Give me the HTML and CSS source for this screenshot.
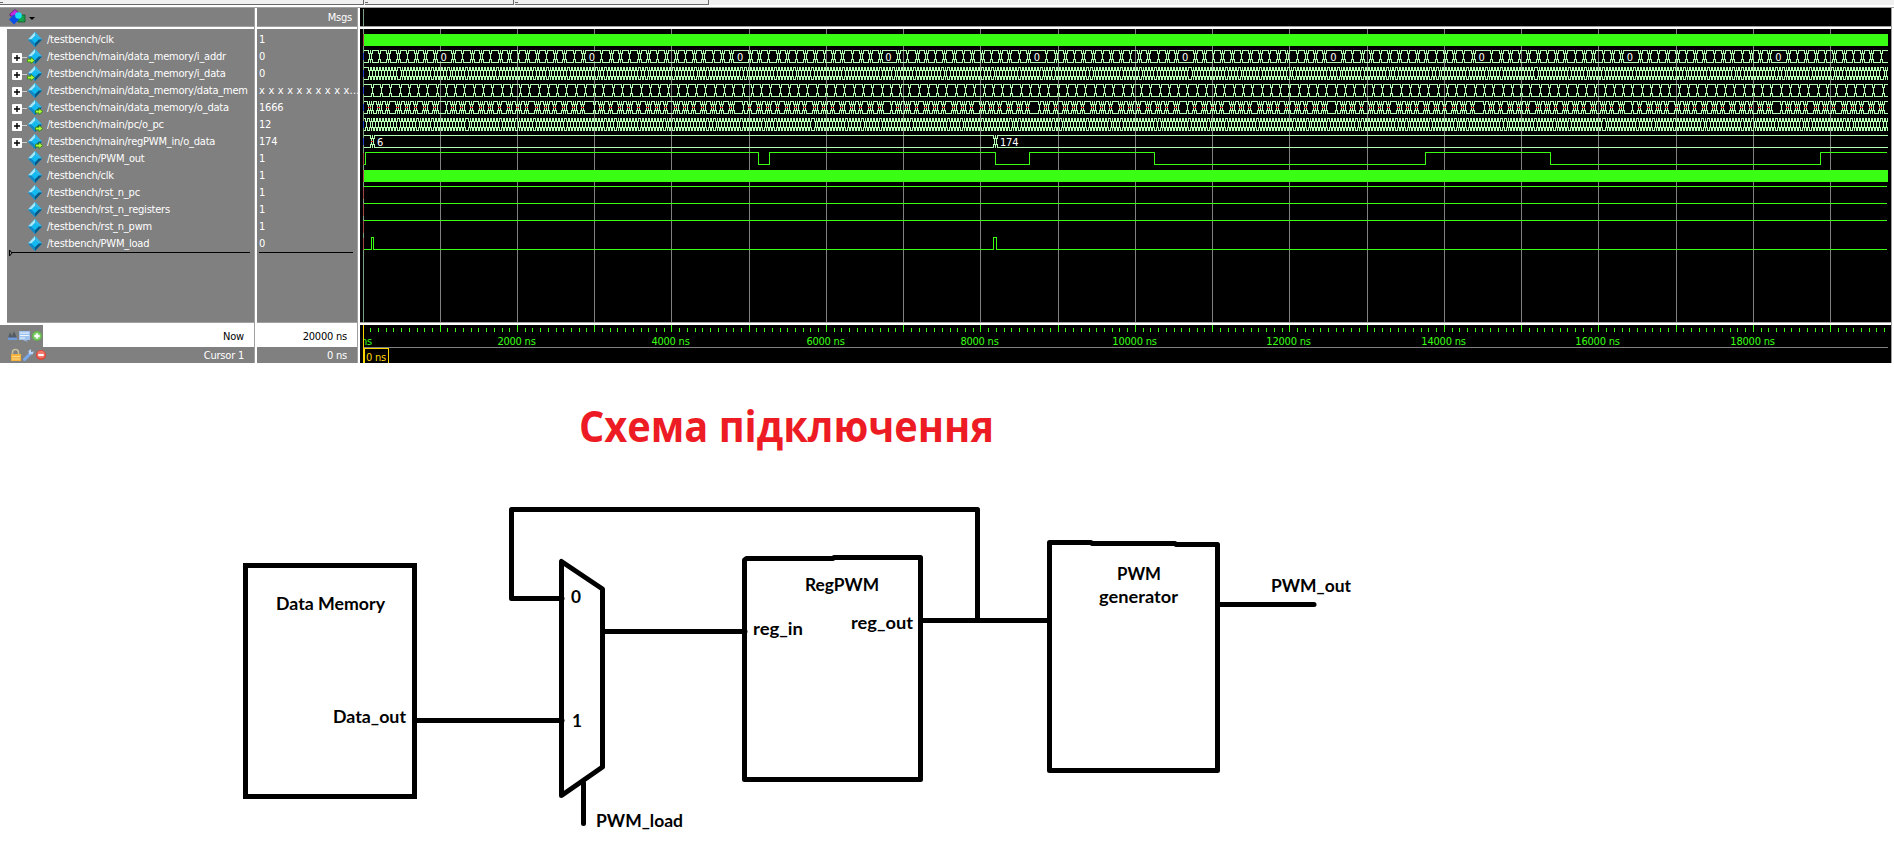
FILE: index.html
```html
<!DOCTYPE html>
<html lang="uk">
<head>
<meta charset="utf-8">
<title>Wave</title>
<link rel="stylesheet" href="styles.css">
</head>
<body>
<svg width="0" height="0" class="defs">
  <symbol id="gem" viewBox="0 0 16 16">
    <path d="M8 0 15 7.5 8 15 1 7.5Z" fill="#18a4dc"/>
    <path d="M8 0 1 7.5 4.5 7.5 8 4Z" fill="#a4e6fa"/>
    <path d="M8 0 15 7.5 11.5 7.5 8 4Z" fill="#35b8e8"/>
    <path d="M1 7.5 8 15 8 11 4.5 7.5Z" fill="#1288c4"/>
    <path d="M15 7.5 8 15 8 11 11.5 7.5Z" fill="#075a86"/>
    <path d="M8 4 11.5 7.5 8 11 4.5 7.5Z" fill="#12baf2"/>
  </symbol>
  <symbol id="arrow" viewBox="0 0 8 7">
    <path d="M.5 2.2H4V.4L7.6 3.5 4 6.6V4.9H.5Z" fill="#b4f83c" stroke="#2f8a10" stroke-width=".8"/>
  </symbol>
</svg>

<div class="strip"><i class="tab t1"></i><i class="tab t2"></i><i class="tab t3"></i></div>

<main class="wave">
  <section class="col names">
    <div class="head">
      <svg class="logo" width="17" height="17" viewBox="0 0 17 17">
        <path d="M1 5 6 .5 11 5V7H1Z" fill="#c22ee0" stroke="#5c1070" stroke-width=".7"/>
        <path d="M9 6H16V13H9Z" fill="#16a24a" stroke="#0a5426" stroke-width=".7"/>
        <path d="M5 5.5 10 10.5 5 15.5 0 10.5Z" fill="#0b50e6"/>
        <circle cx="9.5" cy="6.5" r="3.3" fill="#19dff4"/>
      </svg>
      <i class="caret"></i>
    </div>
    <div class="list" id="names"></div>
    <div class="foot now">
      <svg width="43" height="22" viewBox="0 0 43 22">
        <path d="M0 0H43V22H0Z" fill="#808080"/>
        <path d="M8 13 10 7 12 11 14 6 17 13Z" fill="#555b63"/><path d="M8 12.5H17V15H8Z" fill="#6f9bd8"/>
        <path d="M19 6H30V15H26L28 17 23 15H19Z" fill="#9fc2ee"/><path d="M20 8H29M20 10.5H29M20 13H25" stroke="#eef5ff"/>
        <circle cx="37" cy="11" r="5" fill="#62b848"/><circle cx="37" cy="11" r="3.6" fill="#8fd67c"/><path d="M34.5 11H39.5M37 8.500V13.500" stroke="#fff" stroke-width="1.8"/>
      </svg>
      <span>Now</span>
    </div>
    <div class="foot cur">
      <svg width="48" height="16" viewBox="0 0 48 16">
        <path d="M12.500 7V5.500a3 3 0 0 1 6 0V7" fill="none" stroke="#c9c0a0" stroke-width="1.5"/><path d="M11 7H21V14H11Z" fill="#f2b13c"/><path d="M12 9.500H20M12 12H20" stroke="#ffdc86"/>
        <path d="M24.500 12.500 30 7" stroke="#78a8ec" stroke-width="3" stroke-linecap="round"/><path d="M29 7 28.500 4 31 2 31 5 34 4.500 32.500 7.500Z" fill="#b8d4fa"/>
        <circle cx="41" cy="8" r="5" fill="#e04438"/><circle cx="41" cy="7.500" r="3.800" fill="#f07a6c"/><path d="M38.300 8H43.700" stroke="#fff" stroke-width="2"/>
      </svg>
      <span>Cursor 1</span>
    </div>
  </section>
  <section class="col values">
    <div class="head"><span>Msgs</span></div>
    <div class="list" id="values"></div>
    <div class="foot now"><span>20000 ns</span></div>
    <div class="foot cur"><span>0 ns</span></div>
  </section>
  <section class="plot">
    <svg id="plot" width="1531" height="355" viewBox="360 8 1531 355"></svg>
  </section>
</main>

<svg class="scheme" width="1894" height="487" viewBox="0 363 1894 487">
  <text class="title" x="579" y="441.500" textLength="415" lengthAdjust="spacingAndGlyphs">Схема підключення</text>
  <g class="wires">
    <path class="sharp" d="M245.500 565.500H414.500V796.500H245.500Z"/>
    <path d="M414.500 720.500H562"/>
    <path d="M562 598.500H511.500V509.500H977.500V620.500"/>
    <path d="M561.500 561.500V795.500L602.500 767V589Z"/>
    <path d="M583.500 783V823.500M602.500 631.500H745"/>
    <path d="M744.500 560V779.500H920.500V557.500H834L833 558.500H746.500Z"/>
    <path d="M920.500 620.500H1049.500"/>
    <path d="M1049.500 542.500V770.500H1217.500V544.500H1176L1175 543.500H1092L1091 542.500Z"/>
    <path d="M1217.500 604.500H1314"/>
  </g>
  <g class="labels">
    <text x="276" y="610" textLength="109">Data Memory</text>
    <text x="333" y="723" textLength="73">Data_out</text>
    <text x="571" y="603" textLength="10">0</text>
    <text x="572" y="727" textLength="10">1</text>
    <text x="596" y="827" textLength="87">PWM_load</text>
    <text x="753" y="635" textLength="50">reg_in</text>
    <text x="851" y="629" textLength="62">reg_out</text>
    <text x="805" y="591" textLength="74">RegPWM</text>
    <text x="1117" y="580" textLength="44">PWM</text>
    <text x="1099" y="603" textLength="79">generator</text>
    <text x="1271" y="592" textLength="80">PWM_out</text>
  </g>
</svg>
<script src="wave.js"></script>
</body>
</html>
```

FILE: styles.css
```css
* { box-sizing: border-box; }
body { margin: 0; width: 1894px; height: 850px; overflow: hidden; background: #fff; font: 11px/17px "DejaVu Sans Condensed", "DejaVu Sans", sans-serif; font-stretch: condensed; letter-spacing: -0.22px; }
.defs { position: absolute; }
svg { display: block; }

.strip { height: 8px; display: flex; background: linear-gradient(#f0f0f0 0 5px, #fff 5px 7px, #a0a0a0 7px); }
.tab { height: 5px; border-right: 1px solid #696969; border-bottom: 1px solid #696969; background: linear-gradient(90deg, #696969 0 3px, transparent 3px) 0 2px / 100% 1px no-repeat; }
.t1 { width: 364px; }
.t2 { width: 149px; margin-left: 1px; }
.t3 { width: 194px; margin-left: 1px; }

.wave { display: flex; height: 355px; width: 1894px; }
.col { display: flex; flex-direction: column; color: #fff; border-right: 1px solid #a0a0a0; }
.names { width: 255px; margin-right: 2px; }
.values { width: 101px; margin-right: 2px; }
.head { height: 19px; display: flex; align-items: center; background: #808080; border-bottom: 1px solid #a0a0a0; margin-bottom: 2px; }
.names .head { padding-left: 9px; }
.caret { border: 3px solid transparent; border-top-color: #000; margin: 5px 0 0 3px; }
.values .head { justify-content: flex-end; padding-right: 5px; }
.list { height: 294px; background: #808080; padding-top: 2px; border-bottom: 1px solid #a0a0a0; margin-bottom: 2px; }
.names .list { margin-left: 7px; }
.row { display: flex; height: 17px; align-items: center; white-space: pre; }
.names .row { padding-left: 5px; }
.box { width: 10px; height: 10px; background: #fff; border-radius: 1px; display: flex; margin-top: 2px; }
.box svg { margin: auto; }
.link { width: 5px; height: 1px; background: #d0d0d0; margin-top: 2px; }
.pad { width: 15px; }
.icon { margin-right: 4px; }
.values .row { padding-left: 2px; }
.unknown { letter-spacing: .2px; }
.end { margin-top: -2px; }
.foot { display: flex; align-items: center; justify-content: space-between; }
.foot span { margin-left: auto; padding-right: 10px; }
.now { height: 22px; color: #000; background: #fff; }
.cur { height: 16px; background: #808080; }
.plot { width: 1532px; background: #000; border-right: 1px solid #a0a0a0; }
.plot text { font-size: 11px; letter-spacing: -0.22px; }

.title { font: bold 43.500px "Open Sans", "Noto Sans", sans-serif; fill: #ed1c24; letter-spacing: 0; }
.labels { font: bold 16.500px Lato, "Open Sans", sans-serif; letter-spacing: 0; }
.wires { fill: none; stroke: #000; stroke-width: 5; stroke-linejoin: round; stroke-linecap: round; }
.sharp { stroke-linejoin: miter; }
```

FILE: wave.js
```js
const rows = [
  ['/testbench/clk', '1', 's'],
  ['/testbench/main/data_memory/i_addr', '0', 'i'],
  ['/testbench/main/data_memory/i_data', '0', 'i'],
  ['/testbench/main/data_memory/data_mem', 'x x x x x x x x x x...', 'b'],
  ['/testbench/main/data_memory/o_data', '1666', 'o'],
  ['/testbench/main/pc/o_pc', '12', 'o'],
  ['/testbench/main/regPWM_in/o_data', '174', 'o'],
  ['/testbench/PWM_out', '1', 's'],
  ['/testbench/clk', '1', 's'],
  ['/testbench/rst_n_pc', '1', 's'],
  ['/testbench/rst_n_registers', '1', 's'],
  ['/testbench/rst_n_pwm', '1', 's'],
  ['/testbench/PWM_load', '0', 's']
];
const plus = '<span class="box"><svg width="6" height="6"><path d="M0 3H6M3 0V6" stroke="#000" stroke-width="1.4"/></svg></span><span class="link"></span>';
const arrows = { i: '<use href="#arrow" x="0" y="8" width="8" height="7"/>', o: '<use href="#arrow" x="8" y="8" width="8" height="7"/>', s: '', b: '' };
document.getElementById('names').innerHTML = rows.map(([n, v, k]) =>
  `<div class="row">${k === 's' ? '<span class="pad"></span>' : plus}<svg class="icon" width="16" height="16"><use href="#gem" width="16" height="16"/>${arrows[k]}</svg><span>${n}</span></div>`).join('') +
  '<svg class="end" width="246" height="9"><path d="M2.500 0V6L5 3Z M5 2.500H243" fill="none" stroke="#000"/></svg>';
document.getElementById('values').innerHTML = rows.map(r => `<div class="row${r[2] === 'b' ? ' unknown' : ''}">${r[1]}</div>`).join('') +
  '<svg class="end" width="98" height="9"><path d="M2 2.500H96" stroke="#000"/></svg>';

const X0 = 363, K = 0.07724, END = 1887;
const px = t => Math.floor(X0 + t * K);
let out = '';
const line = (d, c) => { out += `<path d="${d}" fill="none" stroke="${c}" shape-rendering="crispEdges"/>`; };
const rect = (x, y, w, h, c) => { out += `<rect x="${x}" y="${y}" width="${w}" height="${h}" fill="${c}"/>`; };
const text = (x, y, s, c, a = 'start') => { out += `<text x="${x}" y="${y}" fill="${c}" text-anchor="${a}">${s}</text>`; };

// time grid and cursor
for (let t = 1000; t < 19800; t += 1000) rect(px(t), 29, 1, 293, '#808080');
rect(363, 9, 1, 313, '#7f9f83');

// clocks
rect(363, 34, 1525, 12, '#3aff14');
rect(363, 170, 1525, 12, '#3aff14');

// bus outline: cells between crossings, each crossing one pixel wide
function bus(y, xs) {
  let d = '', a = X0;
  for (const b of [...xs.filter(x => x < END), END + 1]) {
    if (b - a > 1) {
      d += `M${a + 1} ${y + .5}H${b}M${a + 1} ${y + 12.5}H${b}`;
      if (a > X0) d += `M${a + 1.5} ${y}V${y + 4}M${a + 1.5} ${y + 9}V${y + 13}`;
      if (b < END) d += `M${b - .5} ${y}V${y + 4}M${b - .5} ${y + 9}V${y + 13}`;
    }
    if (b < END) d += `M${b + .5} ${y + 3}V${y + 10}`;
    a = b;
  }
  line(d, '#b4ffb4');
}
const addr = [], idata = [], mem = [], odata = [], pc = [], red = [];
for (let i = 1; i < 166; i++) {
  const x = px(i * 120), m = (i - 1) % 16;
  mem.push(x);
  if (m === 8) {
    odata.push(x);
    continue;
  }
  if (m !== 7 && i % 3 === 2) addr.push(x - 2);
  else addr.push(x - 3, x - 1);
  odata.push(x - 4, x - 2);
  if (i % 3) odata.push(x);
  red.push(x - 4);
}
for (let t = 80, i = 0; t < 19800; t += 40, i++) {
  idata.push(px(t) + (i % 16 === 10 ? 1 : 0));
  pc.push(px(t - 40) + (i % 16 === 1 ? 1 : 0));
}
bus(50, addr); bus(67, idata); bus(84, mem); bus(101, odata); bus(118, pc);
for (const x of red) if (x < END - 3) rect(x, 107, 3, 1, '#f01818');
bus(135, [371, 373, 994, 996]);
rect(371, 141, 2, 1, '#f01818');

line('M364 164.5H365.5V152.5H758.5V164.5H769.5V152.5H995.5V164.5H1029.5V152.5H1154.5V164.5H1425.5V152.5H1550.5V164.5H1820.5V152.5H1887', '#3aff14');
line('M364 186.5H1887M364 203.5H1887M364 220.5H1887', '#3aff14');
line('M364 249.500H371.500V237.500H373.500V249.500H993.500V237.500H996.500V249.500H1887', '#3aff14');
for (let i = 0; i < 13; i++) {
  const isBus = i > 0 && i < 7;
  rect(363, isBus ? 53 + (i - 1) * 17 : 34 + i * 17, 1, isBus ? 7 : 12, isBus ? '#2040c8' : '#a04848');
}

for (let k = 0; k < 10; k++) {
  const x = 443.5 + k * 148.3;
  rect(x - 4, 52, 8, 9, '#000');
  text(x, 61, '0', '#fff', 'middle');
}
text(377, 146, '6', '#fff');
text(1000, 146, '174', '#fff');

// ruler
rect(360, 26, 1531, 1, '#a0a0a0'); rect(360, 27, 1531, 2, '#fff');
rect(360, 322, 1531, 1, '#a0a0a0'); rect(360, 323, 1531, 2, '#fff');
for (let t = 100; t < 19800; t += 100) {
  const major = t % 1000 === 0;
  rect(px(t), major ? 325 : 328, 1, major ? 7 : 4, '#3aff14');
}
text(361, 345, 'ns', '#3aff14');
rect(360, 333, 3, 14, '#000');
for (let t = 2000; t < 19800; t += 2000) text(px(t) - .5, 345, t + ' ns', '#3aff14', 'middle');
rect(363, 347, 1525, 1, '#808080');
rect(363, 325, 1, 38, '#ffd700');
line('M364.500 363V348.500H388.500V363', '#ffd700');
text(366, 361, '0 ns', '#ffd700');
document.getElementById('plot').innerHTML = out;
for (const el of document.querySelectorAll('.labels text')) el.setAttribute('lengthAdjust', 'spacingAndGlyphs');
```
